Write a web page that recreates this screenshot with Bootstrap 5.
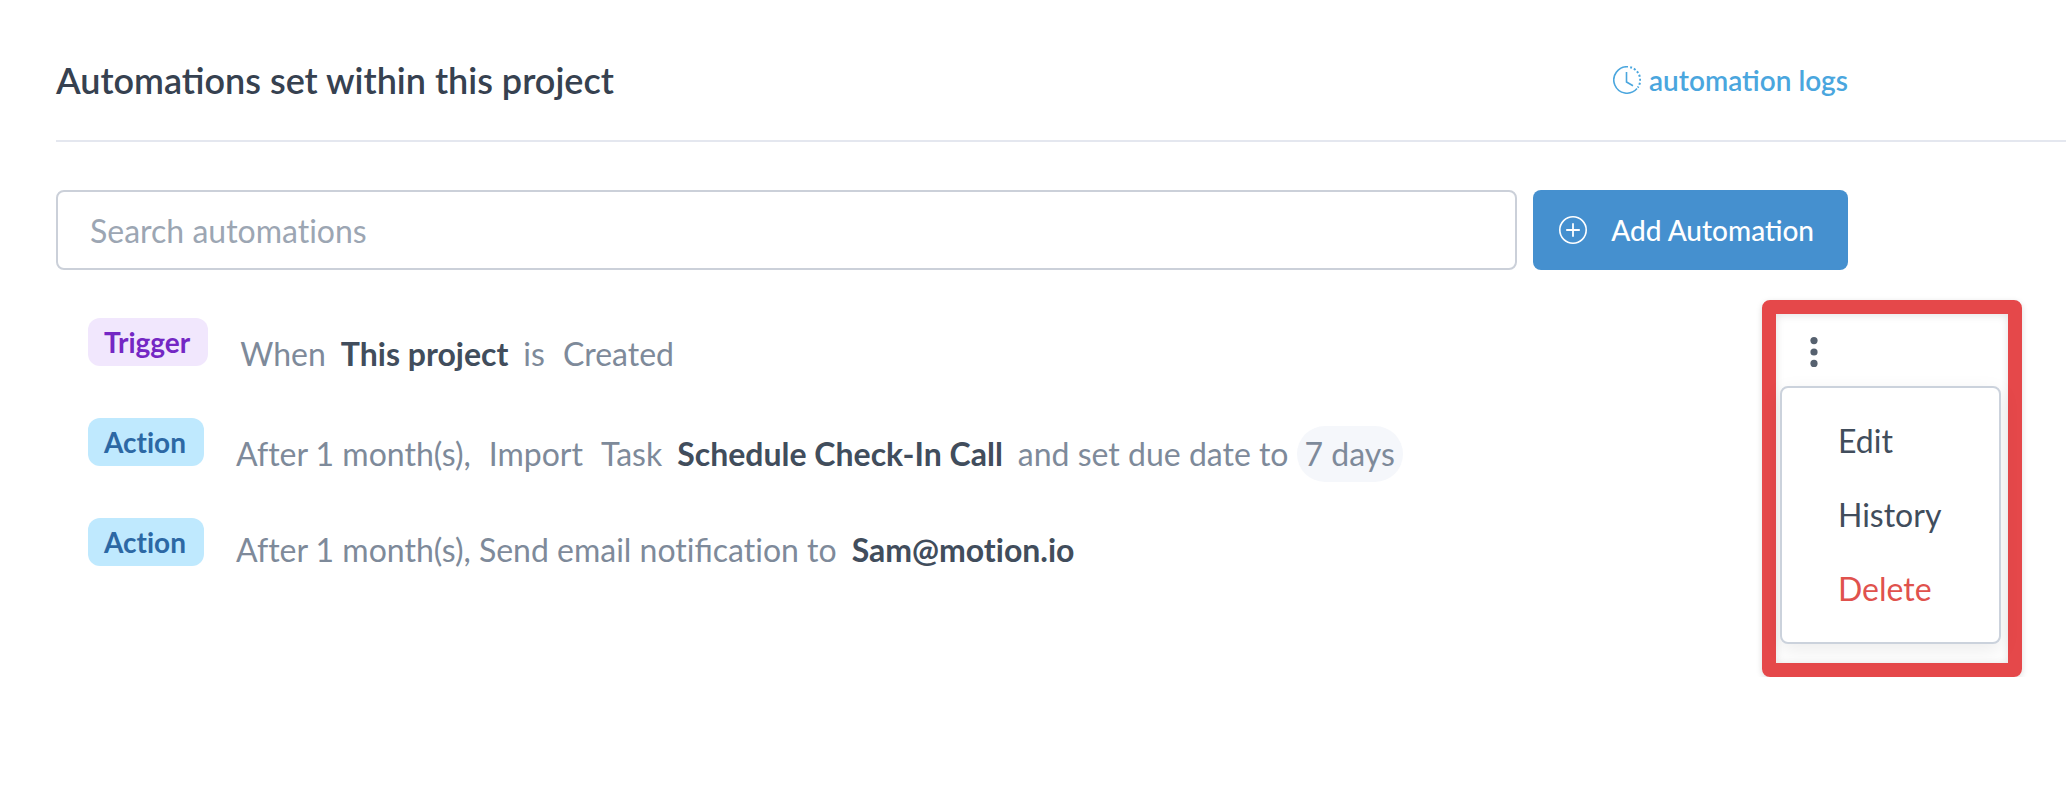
<!DOCTYPE html>
<html lang="en">
<head>
<meta charset="utf-8">
<meta name="viewport" content="width=device-width, initial-scale=1">
<title>Automations</title>
<link href="https://cdn.jsdelivr.net/npm/bootstrap@5.3.0/dist/css/bootstrap.min.css" rel="stylesheet">
<style>
  :root { --edge-start: 56px; --edge-end: 218px; }
  body { font-family: Lato, sans-serif; font-size: 32px; line-height: 48px; color: #7e8a9a; background: #fff; overflow-x: hidden; }
  .page-head { margin-left: var(--edge-start); padding: 56px var(--edge-end) 36px 0; border-bottom: 2px solid #e4e7ef; }
  .page-title { font-size: 36px; line-height: 48px; font-weight: 600; color: #364150; }
  .logs-link { font-size: 28px; font-weight: 600; color: #4aa6de; gap: 8px; }
  .toolbar { padding: 48px var(--edge-end) 0 var(--edge-start); gap: 16px; }
  .search-box { height: 80px; padding: 0 32px; border: 2px solid #cbd0d9; border-radius: 8px; font-size: 32px; font-variant-ligatures: none; }
  .search-box::placeholder { color: #9ca6b3; opacity: 1; }
  .add-btn { height: 80px; padding: 0 34px 0 26px; gap: 24px; border: 0; border-radius: 8px; background: #4590cf; color: #fff; font-size: 28px; font-weight: 500; }
  .rules { padding: 48px 0 0 88px; }
  .rule-row { min-height: 100px; gap: 32px; }
  .tag { font-size: 28px; line-height: 48px; font-weight: 700; padding: 0 18px 0 16px; border-radius: 12px; font-variant-ligatures: none; }
  .tag-trigger { background: #f1e7fd; color: #7427c4; }
  .tag-action { background: #bfe9fe; color: #2c68a4; }
  .rule-text { gap: 18px; margin-top: 8px; font-variant-ligatures: none; }
  .rule-trigger .rule-text { margin-top: 12px; }
  .rule-text strong { color: #414d5c; font-weight: 700; margin: 0 -3px; }
  .lig { font-variant-ligatures: normal; }
  .due-pill { background: #f5f7fb; border-radius: 28px; padding: 4px 8px; margin-left: -10px; }
  .menu-frame { width: 260px; margin: 30px 44px 0 0; border: 14px solid #e5484a; border-radius: 8px; padding: 4px 7px 19px 4px; box-shadow: 0 2px 6px rgba(0,0,0,.14), inset 0 1px 8px rgba(0,0,0,.12); }
  .kebab { width: 68px; height: 68px; border: 0; background: none; color: #56616f; }
  .menu-card { border: 2px solid #cbd2dc; border-radius: 8px; background: #fff; padding: 16px 0; box-shadow: 0 6px 20px rgba(0,0,0,.08); }
  .menu-card .dropdown-item { font-size: 32px; line-height: 42px; padding: 16px 0 16px 56px; color: #414d5c; }
  .menu-card .item-delete { color: #e0524d; }
</style>
</head>
<body>
<header class="page-head d-flex align-items-center justify-content-between">
  <h1 class="page-title m-0">Automations set within this project</h1>
  <a href="#" class="logs-link d-flex align-items-center text-decoration-none">
    <svg width="28" height="28" viewBox="0 0 28 28" fill="none" stroke="currentColor" stroke-width="1.6" aria-hidden="true">
      <path d="M15 .8A13.2 13.2 0 1 0 24 22.600"/>
      <path d="M17.200 1.200A13.200 13.200 0 0 1 24.800 21.600" stroke-width="2" stroke-dasharray="2 2"/>
      <path d="M13.500 6v10l6.500 3.800"/>
    </svg>
    automation logs
  </a>
</header>
<main>
  <div class="toolbar d-flex">
    <input type="search" class="search-box form-control flex-grow-1" placeholder="Search automations" aria-label="Search automations">
    <button type="button" class="add-btn btn d-flex align-items-center flex-shrink-0">
      <svg width="28" height="28" viewBox="0 0 28 28" fill="none" stroke="currentColor" stroke-width="1.6" aria-hidden="true">
        <circle cx="14" cy="14" r="13.200"/><path d="M14 7.200v13.600M7.200 14h13.600" stroke-width="1.800"/>
      </svg>
      Add Automation
    </button>
  </div>
  <div class="d-flex align-items-start">
    <ul class="rules list-unstyled flex-grow-1 m-0">
      <li class="rule-row rule-trigger d-flex align-items-start">
        <span class="tag tag-trigger">Trigger</span>
        <div class="rule-text d-flex align-items-center"><span>When</span><strong>This project</strong><span>is</span><span>Created</span></div>
      </li>
      <li class="rule-row d-flex align-items-start">
        <span class="tag tag-action">Action</span>
        <div class="rule-text d-flex align-items-center"><span>After 1 month(s),</span><span>Import</span><span>Task</span><strong>Schedule Check-In Call</strong><span>and set due date to</span><span class="due-pill">7 days</span></div>
      </li>
      <li class="rule-row d-flex align-items-start">
        <span class="tag tag-action">Action</span>
        <div class="rule-text d-flex align-items-center"><span>After 1 month(s), Send email noti<span class="lig">fi</span>cation to</span><strong>Sam@motion.io</strong></div>
      </li>
    </ul>
    <div class="menu-frame flex-shrink-0">
      <button type="button" class="kebab d-flex align-items-center justify-content-center p-0" aria-label="Automation options" aria-expanded="true">
        <svg width="8" height="30" viewBox="0 0 8 30" fill="currentColor" aria-hidden="true"><circle cx="4" cy="3.600" r="3.600"/><circle cx="4" cy="15" r="3.600"/><circle cx="4" cy="26.400" r="3.600"/></svg>
      </button>
      <div class="menu-card">
        <a href="#" class="dropdown-item">Edit</a>
        <a href="#" class="dropdown-item">History</a>
        <a href="#" class="dropdown-item item-delete">Delete</a>
      </div>
    </div>
  </div>
</main>
<script src="https://cdn.jsdelivr.net/npm/bootstrap@5.3.0/dist/js/bootstrap.bundle.min.js"></script>
</body>
</html>
